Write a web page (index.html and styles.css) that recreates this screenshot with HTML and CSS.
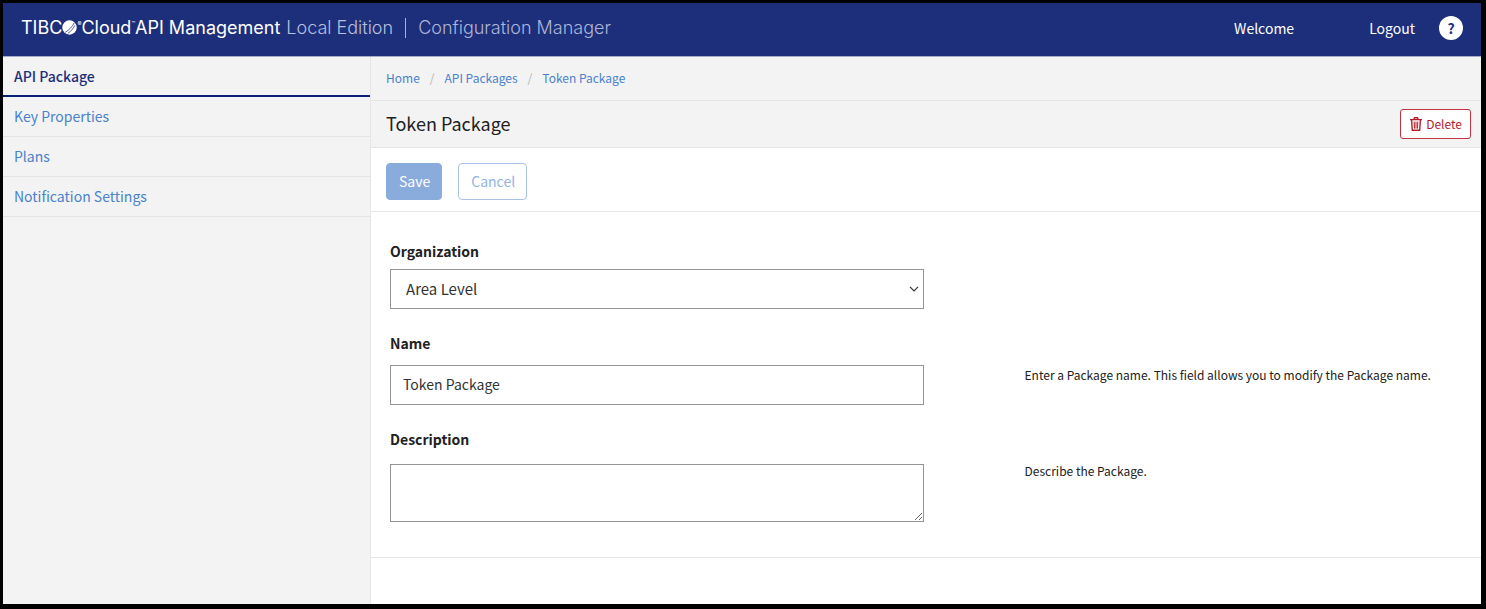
FILE: index.html
```html
<!DOCTYPE html>
<html lang="en">
<head>
<meta charset="utf-8">
<title>Token Package - Configuration Manager</title>
<link rel="stylesheet" href="styles.css">
</head>
<body>
<div class="app">
  <header class="topbar">
    <div class="brand">
      <span class="brand-name">TIBC<svg class="brand-orb" viewBox="0 0 28 28" aria-label="O"><circle cx="14" cy="14" r="13.5" fill="#fff"/><path d="M6 23C13 19 19 13 23 5M11 25C17 21 21 16 24 10" fill="none" stroke="#1d2f7b" stroke-width="1.4"/></svg><sup class="mark">®</sup>Cloud<sup class="mark">™</sup>API Management</span>
      <span class="brand-edition">Local Edition</span>
      <span class="brand-divider"></span>
      <span class="brand-product">Configuration Manager</span>
    </div>
    <nav class="account">
      <span class="welcome">Welcome</span>
      <a class="logout" href="#logout">Logout</a>
      <button class="help" type="button" aria-label="Help">?</button>
    </nav>
  </header>
  <div class="body">
    <nav class="sidebar">
      <a class="side-link side-link-active" href="#package">API Package</a>
      <a class="side-link" href="#keys">Key Properties</a>
      <a class="side-link" href="#plans">Plans</a>
      <a class="side-link" href="#notifications">Notification Settings</a>
    </nav>
    <main class="main">
      <nav class="breadcrumb" aria-label="Breadcrumb">
        <a href="#home">Home</a><span class="slash">/</span><a href="#packages">API Packages</a><span class="slash">/</span><a href="#token">Token Package</a>
      </nav>
      <div class="titlebar">
        <h1 class="title">Token Package</h1>
        <button class="delete" type="button"><svg class="trash" viewBox="0 0 12 14" fill="none" stroke="currentColor"><path d="M0 2.6H12M3.8 2.4L4.5.7H7.5L8.2 2.4M1.6 3L2.3 13.3H9.7L10.4 3" stroke-width="1.4"/><path d="M4.2 4.6L4.5 11.6M6 4.6V11.6M7.8 4.6L7.5 11.6"/></svg>Delete</button>
      </div>
      <div class="actions">
        <button class="btn btn-save" type="button">Save</button>
        <button class="btn btn-cancel" type="button">Cancel</button>
      </div>
      <form class="form">
        <div class="field field-select">
          <label class="label" for="org">Organization</label>
          <div class="select-wrap">
            <select class="control select" id="org"><option>Area Level</option></select>
            <svg class="chevron" viewBox="0 0 10 6" fill="none" stroke="#333" stroke-width="1.2"><path d="M1 .8L5 4.8L9 .8"/></svg>
          </div>
        </div>
        <div class="field">
          <label class="label" for="name">Name</label>
          <input class="control" id="name" type="text" value="Token Package">
          <p class="hint">Enter a Package name. This field allows you to modify the Package name.</p>
        </div>
        <div class="field">
          <label class="label" for="description">Description</label>
          <textarea class="control textarea" id="description"></textarea>
          <p class="hint">Describe the Package.</p>
        </div>
      </form>
    </main>
  </div>
</div>
</body>
</html>
```
FILE: styles.css
```css
* { box-sizing: border-box; }

body {
  margin: 0;
  color: #212121;
  font-family: "Noto Sans CJK SC", "Noto Sans", sans-serif;
  font-size: 14px;
  line-height: 20px;
}

a { color: #4a82cc; text-decoration: none; }
button, input, select, textarea { font: inherit; }

.app {
  display: flex;
  flex-direction: column;
  min-height: 100vh;
  border: solid #000;
  border-width: 3px 5px 5px 3px;
}

.topbar {
  display: flex;
  align-items: center;
  justify-content: space-between;
  min-height: 54px;
  padding: 0 18px 3px;
  border-bottom: 1px solid #a5acca;
  background: #1d2f7b;
  color: #fff;
}

.brand {
  display: flex;
  align-items: center;
  padding-bottom: 1px;
  font-family: Inter, sans-serif;
  font-size: 18px;
  font-weight: 300;
  line-height: 24px;
  white-space: nowrap;
}

.brand-name { font-weight: 400; }
.brand-orb { width: 15px; height: 15px; vertical-align: -1px; }
.mark { font-size: 6px; line-height: 0; vertical-align: 8px; }
.brand-edition { margin-left: 6px; color: #b9c0de; }
.brand-divider { width: 1px; height: 20px; margin: 0 12px; background: #a9b1d3; }
.brand-product { color: #adb5d8; }

.account { display: flex; align-items: center; }
.logout { margin: 0 24px 0 75px; color: #fff; }

.help {
  width: 24px;
  height: 24px;
  padding: 0;
  border: 0;
  border-radius: 50%;
  background: #fff;
  color: #1d2f7b;
  font-weight: 700;
}

.body {
  display: grid;
  flex: 1;
  grid-template-columns: 249fr 751fr;
}

.sidebar { border-right: 1px solid #e6e6e6; background: #f3f3f3; }

.side-link {
  display: block;
  padding: 9px 11px 10px;
  border-bottom: 1px solid #e4e4e4;
}

.side-link-active {
  padding: 9px 11px;
  border-bottom: 2px solid #0b2078;
  color: #1d2f7b;
  font-weight: 500;
}

.main { min-width: 0; }

.breadcrumb {
  padding: 11px 15px 12px;
  border-bottom: 1px solid #e6e6e6;
  background: #f3f3f3;
  font-size: 12px;
}

.slash { margin: 0 10px; color: #b5b5b5; }

.titlebar {
  display: flex;
  align-items: center;
  justify-content: space-between;
  padding: 8px 10px 8px 15px;
  border-bottom: 1px solid #e6e6e6;
  background: #f3f3f3;
}

.title { margin: 0; padding-bottom: 2px; font-size: 18px; font-weight: 400; line-height: 24px; }

.delete {
  display: flex;
  align-items: center;
  gap: 4px;
  height: 30px;
  padding: 0 8px 0 9px;
  border: 1px solid #c2313d;
  border-radius: 3px;
  background: #fff;
  color: #b3202c;
  font-size: 12px;
}

.trash { width: 12px; height: 14px; }

.actions {
  display: flex;
  gap: 16px;
  padding: 15px 15px 11px;
  border-bottom: 1px solid #e6e6e6;
}

.btn { height: 37px; padding: 0 11px 1px 12px; border: 1px solid #8aacdc; border-radius: 4px; }
.btn-save { background: #8aacdc; color: #fff; }
.btn-cancel { border-color: #a7c3e8; background: #fff; color: #92b4e2; }

.form {
  display: grid;
  gap: 24px;
  padding: 29px 19px 35px;
  border-bottom: 1px solid #e6e6e6;
}

.field {
  display: grid;
  grid-template-columns: 533fr 437fr;
  column-gap: 101px;
  row-gap: 12px;
}

.field-select { row-gap: 8px; }
.label { grid-column: 1 / -1; font-weight: 700; }

.control {
  display: block;
  width: 100%;
  height: 40px;
  padding: 0 12px 2px;
  border: 1px solid #949494;
  border-radius: 0;
  background: #fff;
  color: #333;
}

.select-wrap { position: relative; }
.select { padding: 0 15px; font-size: 15px; appearance: none; }

.chevron {
  position: absolute;
  top: 17px;
  right: 5px;
  width: 10px;
  height: 6px;
  pointer-events: none;
}

.textarea { height: 58px; margin-top: 3px; resize: vertical; }
.hint { margin: 0; font-size: 12px; }
```
